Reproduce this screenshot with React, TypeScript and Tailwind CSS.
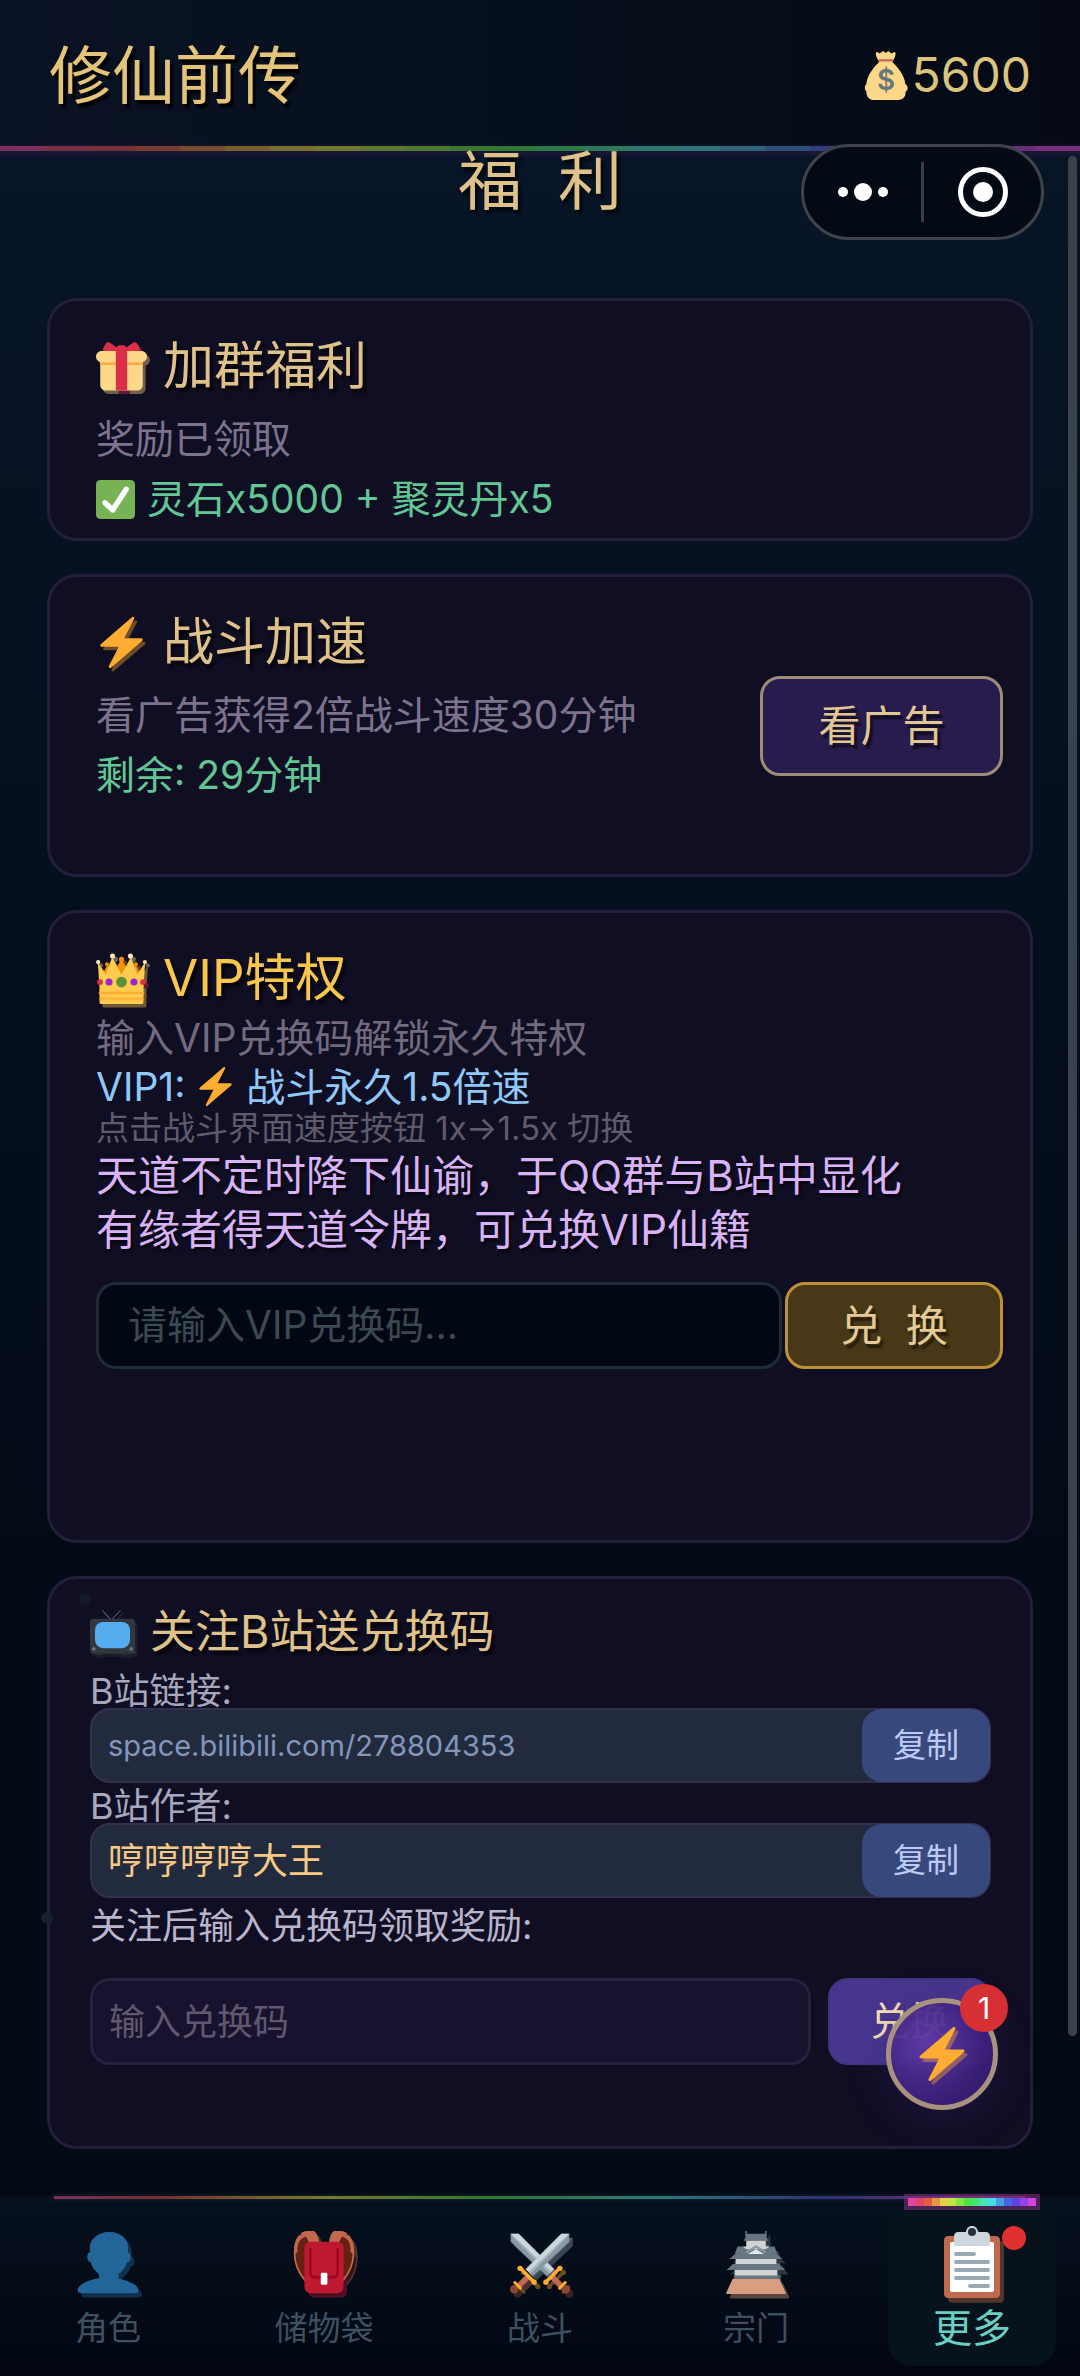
import { useState, type ReactNode } from "react";
import clsx from "clsx";

/* ---------- Icons (36 x 36 grid) ---------- */

type IconProps = { className?: string; shadow?: boolean };

function Icon({ className, shadow, children }: IconProps & { children: ReactNode }) {
  return (
    <svg viewBox="0 0 36 36" aria-hidden="true" className={clsx("shrink-0 overflow-visible", className)}>
      {shadow && (
        <g transform="translate(2 2.4)" opacity="0.4">
          {children}
        </g>
      )}
      {children}
    </svg>
  );
}

function BoltIcon(props: IconProps) {
  return (
    <Icon {...props}>
      <path
        fill="#FFAC33"
        d="M32.938 15.651C32.792 15.26 32.418 15 32 15H19.925L26.89 1.458c.219-.426.106-.947-.271-1.243C26.437.071 26.218 0 26 0c-.233 0-.466.082-.653.243L18 6.588 3.347 19.243c-.316.273-.43.714-.284 1.105S3.582 21 4 21h12.075L9.11 34.542c-.219.426-.106.947.271 1.243.182.144.401.215.619.215.233 0 .466-.082.653-.243L18 29.412l14.653-12.655c.317-.273.43-.714.285-1.106z"
      />
    </Icon>
  );
}

function GiftIcon(props: IconProps) {
  return (
    <Icon {...props}>
      <path fill="#FDD888" d="M33 31c0 2.2-1.8 4-4 4H7c-2.2 0-4-1.8-4-4V14c0-2.2 1.8-4 4-4h22c2.2 0 4 1.8 4 4v17z" />
      <path fill="#FCAB40" d="M3 15h30v2H3z" />
      <path fill="#FDD888" d="M36 11c0 2.2-1.8 4-4 4H4c-2.2 0-4-1.8-4-4s1.8-4 4-4h28c2.2 0 4 1.8 4 4z" />
      <path fill="#DA2F47" d="M19 3h-2c-1.657 0-3 1.343-3 3v29h8V6c0-1.657-1.343-3-3-3z" />
      <path
        fill="#DA2F47"
        d="M16 7c1.1 0 1.263-.516.361-1.147L9.639 1.147c-.902-.631-2.085-.366-2.631.589L4.992 5.264C4.446 6.219 4.9 7 6 7h10zm4 0c-1.1 0-1.263-.516-.361-1.147l6.723-4.706c.901-.631 2.085-.366 2.631.589l2.016 3.527C31.554 6.219 31.1 7 30 7H20z"
      />
    </Icon>
  );
}

function CheckIcon(props: IconProps) {
  return (
    <Icon {...props}>
      <rect fill="#77B255" width="36" height="36" rx="4" />
      <path
        fill="#FFF"
        d="M29.28 6.362c-1.156-.751-2.704-.422-3.458.736L14.936 23.877l-5.029-4.65c-1.014-.938-2.596-.875-3.533.138-.937 1.014-.875 2.596.139 3.533l7.209 6.666c.48.445 1.09.665 1.696.665.673 0 1.534-.282 2.099-1.139.332-.506 12.5-19.27 12.5-19.27.751-1.159.421-2.707-.737-3.458z"
      />
    </Icon>
  );
}

function CrownIcon(props: IconProps) {
  return (
    <Icon {...props}>
      <path fill="#F4900C" d="M14 11 12 14 8.600 9l-1 0L4 16v8h28v-8L28.400 9h-1L24 14l-2-3-3.500-6h-1z" />
      <circle fill="#F4900C" cx="18" cy="4.500" r="1.800" />
      <circle fill="#F4900C" cx="7.800" cy="8" r="1.400" />
      <circle fill="#F4900C" cx="28.200" cy="8" r="1.400" />
      <path fill="#FFCC4D" d="M1.300 6.600 2.600 27h30.800l1.300-20.400-5.500 8.200L24.600 3 18 15.200 11.400 3 6.800 14.800z" />
      <circle fill="#FFE8B6" cx="1.500" cy="6.400" r="1.500" />
      <circle fill="#FFE8B6" cx="34.500" cy="6.400" r="1.500" />
      <circle fill="#FFE8B6" cx="11.700" cy="2.100" r="1.800" />
      <circle fill="#FFE8B6" cx="24.300" cy="2.100" r="1.800" />
      <path fill="#FFCC4D" d="M2.500 26h31v9a1 1 0 0 1-1 1h-29a1 1 0 0 1-1-1z" />
      <path fill="#FFAC33" d="M2 27.400h32v1.800H2zM2.500 31.400h31v1.500h-31z" />
      <circle fill="#5C913B" cx="18" cy="20.500" r="3.800" />
      <circle fill="#9D22D0" cx="9.200" cy="20.500" r="2.500" />
      <circle fill="#9D22D0" cx="26.800" cy="20.500" r="2.500" />
      <circle fill="#DD2E44" cx="2.800" cy="20.500" r="2" />
      <circle fill="#DD2E44" cx="33.200" cy="20.500" r="2" />
    </Icon>
  );
}

function TvIcon(props: IconProps) {
  return (
    <Icon {...props}>
      <path fill="none" stroke="#66757F" strokeWidth="0.8" strokeLinecap="round" d="m10 .5 7 7.500L24 .5" />
      <rect fill="#31373D" y="7" width="36" height="28" rx="3" />
      <path fill="#292F33" d="M4 34h6v2H4zM26 34h6v2h-6z" />
      <rect fill="#55ACEE" x="4" y="9.500" width="28" height="21" rx="6.500" />
      <circle fill="#66757F" cx="3" cy="31" r="1.500" />
      <circle fill="#66757F" cx="33" cy="31" r="1.500" />
    </Icon>
  );
}

function MoneyBagIcon(props: IconProps) {
  return (
    <Icon {...props}>
      <path
        fill="#FDD888"
        d="M31.900 24.500c-.2-5.500-5.600-12.500-9.400-15.800.9-1.400 2-3.300 2.400-5.600.3-1.400-1-2.200-1.900-1.200-.7.800-1.600.6-2.200-.2-.7-1-1.700-.9-2.300-.1-.4.600-1 .6-1.500 0-.7-.8-1.600-.9-2.300.1-.5.800-1.500 1-2.200.2-.9-1-2.100-.2-1.800 1.200.4 2.300 1.500 4.200 2.400 5.600-3.800 3.300-9 10.300-9.200 15.800-1.700 1.400-1.300 4.400.1 5.500-.4 3 1.700 6 5.200 6h17.600c3.600 0 5.700-3 5.200-5.800 2.300-1.300 2-4.600-.1-5.700z"
      />
      <path fill="none" stroke="#BF6952" strokeWidth="1.600" strokeLinecap="round" d="M13.200 7.400h9.600" />
      <text x="18" y="28.500" textAnchor="middle" fontSize="20" fill="#67757F" className="font-['Inter',sans-serif] font-semibold">
        $
      </text>
    </Icon>
  );
}

function PersonIcon(props: IconProps) {
  return (
    <Icon {...props}>
      <path
        fill="#269"
        d="M24 26.799v-2.566c2-1.348 4.08-3.779 4.703-6.896.186.103.206.17.413.17.991 0 1.709-1.287 1.709-2.873 0-1.562-.823-2.827-1.794-2.865.187-.674.293-1.577.293-2.735C29.324 5.168 26 .527 18.541.527c-6.629 0-10.777 4.641-10.777 8.507 0 1.123.069 2.043.188 2.755-.911.137-1.629 1.352-1.629 2.845 0 1.587.804 2.873 1.796 2.873.206 0 .025-.067.209-.17C8.952 20.453 11 22.885 13 24.232v2.414c-5 .645-12 3.437-12 6.23v1.061C1 35 2.076 35 3.137 35h29.725C33.924 35 35 35 35 33.938v-1.061c0-2.615-6-5.225-11-6.078z"
      />
    </Icon>
  );
}

function BackpackIcon(props: IconProps) {
  return (
    <Icon {...props}>
      <path fill="#662113" d="M8 2.500C3.500 2 1.300 8 1.300 13c0 6 3.200 11.500 6.200 15l3-14-1-10zM28 2.500c4.500-.5 6.700 5.500 6.700 10.500 0 6-3.200 11.500-6.200 15l-3-14 1-10z" />
      <path fill="none" stroke="#C1694F" strokeWidth="1" d="M7.500 28C4 24 1.500 19 1.500 13 1.500 6.500 4 2 8 2M28.500 28c3.500-4 6-9 6-15C34.500 6.500 32 2 28 2" />
      <path fill="#C1694F" d="M4.500 1.800C6 .3 7.500 0 9.500 0h3c1.800 1.500 2.500 4 2.700 6.500H9.500C8.500 3.500 7.500 2.300 4.500 1.800zM31.500 1.800C30 .3 28.500 0 26.500 0h-3c-1.800 1.500-2.500 4-2.700 6.500h5.700c1-3 2-4.200 5-4.700z" />
      <path fill="#C1694F" d="M4.200 2.200C1.500 4.600.9 9 1.300 13L3 12c0-4 .5-7.500 5-9zM31.800 2.200c2.700 2.400 3.300 6.800 2.900 10.800L33 12c0-4-.5-7.500-5-9z" />
      <rect fill="#BE1931" x="7" y="6" width="22" height="29" rx="3.500" />
      <path fill="none" stroke="#A0041E" strokeWidth="1.400" d="M10.300 9.500V23c0 2 1 3 3 3h9.400c2 0 3-1 3-3V9.500" />
      <rect fill="#FFF" x="16.200" y="23.500" width="3.700" height="6.800" rx="0.800" />
    </Icon>
  );
}

function Sword() {
  return (
    <>
      <path fill="#8899A6" d="M1.500 1.500H6L26 21.500l-4 4L1.500 6z" />
      <path fill="#CCD6DD" d="M1.500 1.500H6L26 21.500l-1.600 1.600z" />
      <path fill="#AAB8C2" d="M1.500 1.500 24.400 23.100l-1 1L3 3.600z" />
      <path fill="none" stroke="#BF6952" strokeWidth="3.200" d="m24.500 25.500 6 6" />
      <circle fill="#8A4633" cx="32.500" cy="32.800" r="2.400" />
      <path fill="none" stroke="#FFAC33" strokeWidth="2" strokeLinecap="round" d="m21.500 28.500 7.500-7.500" />
      <circle fill="#FFAC33" cx="21.300" cy="28.800" r="1.500" />
      <circle fill="#FFAC33" cx="29.200" cy="21" r="1.500" />
      <path fill="none" stroke="#FFAC33" strokeWidth="1.600" strokeLinecap="round" d="m29 32.200 3.200-3.200" />
    </>
  );
}

function SwordsIcon(props: IconProps) {
  return (
    <Icon {...props}>
      <Sword />
      <g transform="matrix(-1 0 0 1 36 0)">
        <Sword />
      </g>
    </Icon>
  );
}

function CastleIcon(props: IconProps) {
  return (
    <Icon {...props}>
      <path fill="#D99E82" d="M4.800 27h26.400l3.400 7.500c.3.600 0 1-.6 1H2c-.6 0-.9-.4-.6-1z" />
      <path fill="#66757F" d="M12 0h.9v1.600h10.200V0h.9v4l1 1.500H11L12 4z" />
      <path fill="#D1D3D4" d="M12.500 5.500h11v5h-11zM6.500 15.500h23v5h-23zM6 22h24v3.500H6zM10.500 8.700h15v2h-15z" />
      <path fill="#66757F" d="M7.500 8.700h3l2 1.500h11l2-1.500h3l1.500 4.500 3 2.500h-30l3-2.500z" />
      <path fill="#E1E8ED" d="m18 10.300 4.600 2.700H13.400z" />
      <path fill="none" stroke="#8899A6" strokeWidth="1.200" d="m12.500 12 5.500-3.300 5.500 3.300" />
      <path fill="#66757F" d="M5 18.500h26l3.500 3.500h-33zM5.500 25h25v2h-25z" />
    </Icon>
  );
}

function ClipboardIcon(props: IconProps) {
  return (
    <Icon {...props}>
      <path fill="#C1694F" d="M32 34c0 1.104-.896 2-2 2H6c-1.104 0-2-.896-2-2V7c0-1.104.896-2 2-2h24c1.104 0 2 .896 2 2v27z" />
      <path fill="#FFF" d="M29 32c0 .553-.447 1-1 1H8c-.552 0-1-.447-1-1V9c0-.552.448-1 1-1h20c.553 0 1 .448 1 1v23z" />
      <path fill="#CCD6DD" d="M25 3h-4c0-1.657-1.343-3-3-3s-3 1.343-3 3h-4c-1.104 0-2 .896-2 2v5h18V5c0-1.104-.896-2-2-2z" />
      <circle fill="#292F33" cx="18" cy="3" r="2" />
      <path fill="none" stroke="#99AAB5" strokeWidth="2" strokeLinecap="round" d="M10 14h9M10 18h16M10 22h16M10 26h16M17 30h9" />
    </Icon>
  );
}

/* ---------- Shared pieces ---------- */

function Rainbow({ steps, className, vivid }: { steps: number; className: string; vivid?: boolean }) {
  return (
    <div className={clsx("flex", className)}>
      {Array.from({ length: steps }, (_, i) => {
        const hue = 325 + (i * 350) / steps;
        return (
          <span
            key={i}
            className="flex-1"
            style={{ backgroundColor: vivid ? `hsl(${hue} 75% 58%)` : `hsl(${hue} 44% 33%)` }}
          />
        );
      })}
    </div>
  );
}

function Card({ children, className }: { children: ReactNode; className?: string }) {
  return (
    <section className={clsx("rounded-[30px] border-[3px] border-[#231e3c] bg-[#100e23]", className)}>{children}</section>
  );
}

function CardTitle({ icon, children, className }: { icon: ReactNode; children: string; className?: string }) {
  return (
    <h2
      className={clsx(
        "flex items-center gap-4 text-[51px] leading-[66px] [text-shadow:3px_4px_3px_#000000b3]",
        className ?? "text-[#dfc28a]",
      )}
    >
      {icon}
      {children}
    </h2>
  );
}

function CopyRow({ label, value, className }: { label: string; value: string; className: string }) {
  return (
    <>
      <p className="pt-[6px] text-4xl leading-[34px] text-[#a6a8bd]">{label}</p>
      <div className="flex h-[75px] items-stretch rounded-[20px] border-2 border-[#352f52] bg-[#222a3e]">
        <span className={clsx("flex flex-1 items-center pl-4", className)}>{value}</span>
        <button
          type="button"
          onClick={() => navigator.clipboard?.writeText(value)}
          className="-my-px -mr-px w-32 rounded-[20px] bg-[#37487c] text-[33px] text-[#bccaf5]"
        >
          复制
        </button>
      </div>
    </>
  );
}

const TABS = [
  { name: "角色", icon: PersonIcon },
  { name: "储物袋", icon: BackpackIcon },
  { name: "战斗", icon: SwordsIcon },
  { name: "宗门", icon: CastleIcon },
  { name: "更多", icon: ClipboardIcon, dot: true },
];

function App() {
  const [tab, setTab] = useState("更多");

  return (
    <div className="relative flex h-dvh flex-col overflow-hidden bg-linear-to-b from-[#081628] via-[#030b17] via-65% to-[#030a13] font-['Inter','Noto_Sans_CJK_SC',sans-serif]">
      {/* Header */}
      <header className="bg-linear-to-r from-[#0a1225] via-[#06101c] to-[#050a15]">
        <div className="flex h-[146px] items-center justify-between px-[49px] pt-1">
          <h1 className="text-[63px] leading-[72px] text-[#e3c479] [text-shadow:3px_4px_2px_#000000]">修仙前传</h1>
          <div className="flex items-center text-5xl leading-[60px] text-[#dcc47e]">
            <MoneyBagIcon className="size-[50px]" />
            5600
          </div>
        </div>
        <Rainbow steps={24} className="h-[5px] shadow-[0_2px_3px_3px_#3a205055]" />
      </header>

      {/* Mini-program capsule */}
      <div className="absolute top-36 right-9 z-10 flex h-24 w-[243px] items-center rounded-full border-[3px] border-[#3f434c] bg-[#040912]/95">
        <button type="button" aria-label="菜单" className="flex flex-1 justify-center">
          <svg viewBox="0 0 60 24" className="h-6 w-[60px]" fill="#fff">
            <circle cx="10" cy="12" r="5" />
            <circle cx="30" cy="12" r="9" />
            <circle cx="50" cy="12" r="5" />
          </svg>
        </button>
        <span className="h-[60px] w-[3px] bg-[#3a3f47]" />
        <button type="button" aria-label="关闭" className="flex flex-1 justify-center">
          <svg viewBox="0 0 50 50" className="size-[50px]">
            <circle cx="25" cy="25" r="22.5" fill="none" stroke="#fff" strokeWidth="5" />
            <circle cx="25" cy="25" r="10" fill="#fff" />
          </svg>
        </button>
      </div>

      {/* Scroll thumb */}
      <div className="absolute top-[156px] right-[3px] h-[1880px] w-[9px] rounded-full bg-[#3c424d]" />

      {/* Drifting particles */}
      <span className="absolute top-[1593px] left-[79px] size-3 rounded-full bg-[#131a2a]" />
      <span className="absolute top-[1912px] left-[41px] size-3 rounded-full bg-[#16202f]" />

      <main className="flex min-h-0 flex-1 flex-col gap-[33px] px-[47px]">
        <h2 className="mb-[54px] text-center text-[64px] leading-[60px] whitespace-pre text-[#dfc28a] [text-shadow:3px_4px_3px_#000000b3]">
          福  利
        </h2>

        <Card className="px-[46px] pt-8 pb-[9px]">
          <CardTitle icon={<GiftIcon shadow className="size-[51px]" />}>加群福利</CardTitle>
          <p className="mt-[10px] text-[39px] leading-[60px] text-[#7d738e]">奖励已领取</p>
          <p className="flex items-center gap-3 text-[39px] leading-[60px] text-[#62c795]">
            <CheckIcon className="size-[39px]" />
            灵石x5000 + 聚灵丹x5
          </p>
        </Card>

        <Card className="flex items-center justify-between pr-[27px] pl-[46px]">
          <div className="pt-8 pb-[69px]">
            <CardTitle icon={<BoltIcon shadow className="size-[51px]" />}>战斗加速</CardTitle>
            <p className="mt-[10px] text-[39px] leading-[60px] text-[#7d738e]">看广告获得2倍战斗速度30分钟</p>
            <p className="text-[39px] leading-[60px] text-[#62c795]">剩余: 29分钟</p>
          </div>
          <button
            type="button"
            className="h-[100px] w-[243px] rounded-[20px] border-[3px] border-[#9e8b78] bg-[#271c4d] text-[42px] text-[#e0c793] [text-shadow:3px_4px_2px_#00000099]"
          >
            看广告
          </button>
        </Card>

        <Card className="pt-8 pr-[27px] pb-[171px] pl-[46px]">
          <CardTitle className="text-[#f8c74b]" icon={<CrownIcon shadow className="size-[51px]" />}>
            VIP特权
          </CardTitle>
          <p className="mt-[2px] text-[39px] leading-[49px] text-[#736a80]">输入VIP兑换码解锁永久特权</p>
          <p className="flex items-center text-[39px] leading-[49px] whitespace-pre text-[#90c8f8]">
            VIP1: <BoltIcon className="size-[39px]" /> 战斗永久1.5倍速
          </p>
          <p className="text-[33px] leading-[34px] text-[#605b6b]">点击战斗界面速度按钮 1x→1.5x 切换</p>
          <p className="mt-1 text-[42px] leading-[54px] text-[#d9b3f5] [text-shadow:2px_3px_2px_#00000099]">
            天道不定时降下仙谕，于QQ群与B站中显化
            <br />
            有缘者得天道令牌，可兑换VIP仙籍
          </p>
          <form className="mt-[25px] flex h-[87px] gap-[3px]" onSubmit={(e) => e.preventDefault()}>
            <input
              type="text"
              aria-label="VIP兑换码"
              placeholder="请输入VIP兑换码..."
              className="min-w-0 flex-1 rounded-[20px] border-[3px] border-[#1d2c39] bg-[#020813] px-[29px] text-[39px] text-[#b9c7cf] placeholder:text-[#3b4951]"
            />
            <button
              type="submit"
              className="w-[218px] rounded-[20px] border-[3px] border-[#bd9138] bg-[#493817] text-[42px] whitespace-pre text-[#e3cb95] [text-shadow:3px_4px_2px_#00000080]"
            >
              兑  换
            </button>
          </form>
        </Card>

        <Card className="pt-6 pr-[39px] pb-[81px] pl-10">
          <h2 className="flex items-center gap-[15px] text-[45px] leading-[58px] text-[#dfc28a] [text-shadow:3px_4px_3px_#000000b3]">
            <TvIcon shadow className="size-[45px]" />
            关注B站送兑换码
          </h2>
          <div className="mt-[7px]">
            <CopyRow label="B站链接:" value="space.bilibili.com/278804353" className="text-[29px] text-[#8496bb]" />
            <CopyRow label="B站作者:" value="哼哼哼哼大王" className="text-4xl text-[#f8c985]" />
          </div>
          <label htmlFor="bili-code" className="mt-[11px] block text-4xl leading-[34px] text-[#b9b5cc]">
            关注后输入兑换码领取奖励:
          </label>
          <form className="mt-[35px] flex h-[87px] gap-[17px]" onSubmit={(e) => e.preventDefault()}>
            <input
              id="bili-code"
              type="text"
              placeholder="输入兑换码"
              className="min-w-0 flex-1 rounded-[20px] border-[3px] border-[#27203f] bg-[#18122e] px-4 text-4xl text-[#b9b5cc] placeholder:text-[#5f5870]"
            />
            <button type="submit" className="w-[163px] rounded-[20px] border-2 border-[#41357f] bg-[#48368e] text-[39px] text-[#fbe2b5]">
              兑换
            </button>
          </form>
        </Card>
      </main>

      {/* Speed-up bubble */}
      <button
        type="button"
        aria-label="加速"
        className="absolute right-[82px] bottom-[266px] flex size-28 items-center justify-center rounded-full border-[5px] border-[#a8917f] bg-[radial-gradient(circle_at_35%_40%,#5d3aa6f2,#3a1f78f2_65%,#34196ff2)] shadow-[0_6px_40px_#3a237055]"
      >
        <BoltIcon shadow className="size-[54px]" />
        <span className="absolute -top-[19px] -right-[15px] flex size-12 items-center justify-center rounded-full bg-[#d63034] text-3xl text-white">
          1
        </span>
      </button>

      {/* Bottom tabs */}
      <nav className="relative grid h-[180px] grid-cols-5 bg-linear-to-b from-[#07111e] to-[#020712]">
        <Rainbow steps={72} className="absolute inset-x-[54px] top-0 h-[3px] shadow-[0_0_3px_2px_#20303a66]" />
        {TABS.map(({ name, icon: TabIcon, dot }) => {
          const active = tab === name;
          return (
            <div key={name} className={clsx("relative py-[10px]", active && "px-6")}>
              <button
                type="button"
                onClick={() => setTab(name)}
                className={clsx(
                  "relative flex h-full w-full flex-col items-center rounded-[24px]",
                  active ? "bg-[#06131d] pt-5 text-[39px] text-[#6ccfc4]" : "pt-[25px] text-[33px] text-[#3f5060]",
                )}
              >
                {active && (
                  <Rainbow vivid steps={16} className="absolute inset-x-5 -top-2 h-2 shadow-[0_0_0_4px_#7a2f7a99]" />
                )}
                <TabIcon shadow className={active ? "size-[72px]" : "size-16"} />
                <span className={active ? "mt-1 leading-[52px]" : "mt-3 leading-[42px]"}>{name}</span>
                {dot && <span className="absolute top-5 right-[30px] size-6 rounded-full bg-[#e03131]" />}
              </button>
            </div>
          );
        })}
      </nav>
    </div>
  );
}

export default App;
